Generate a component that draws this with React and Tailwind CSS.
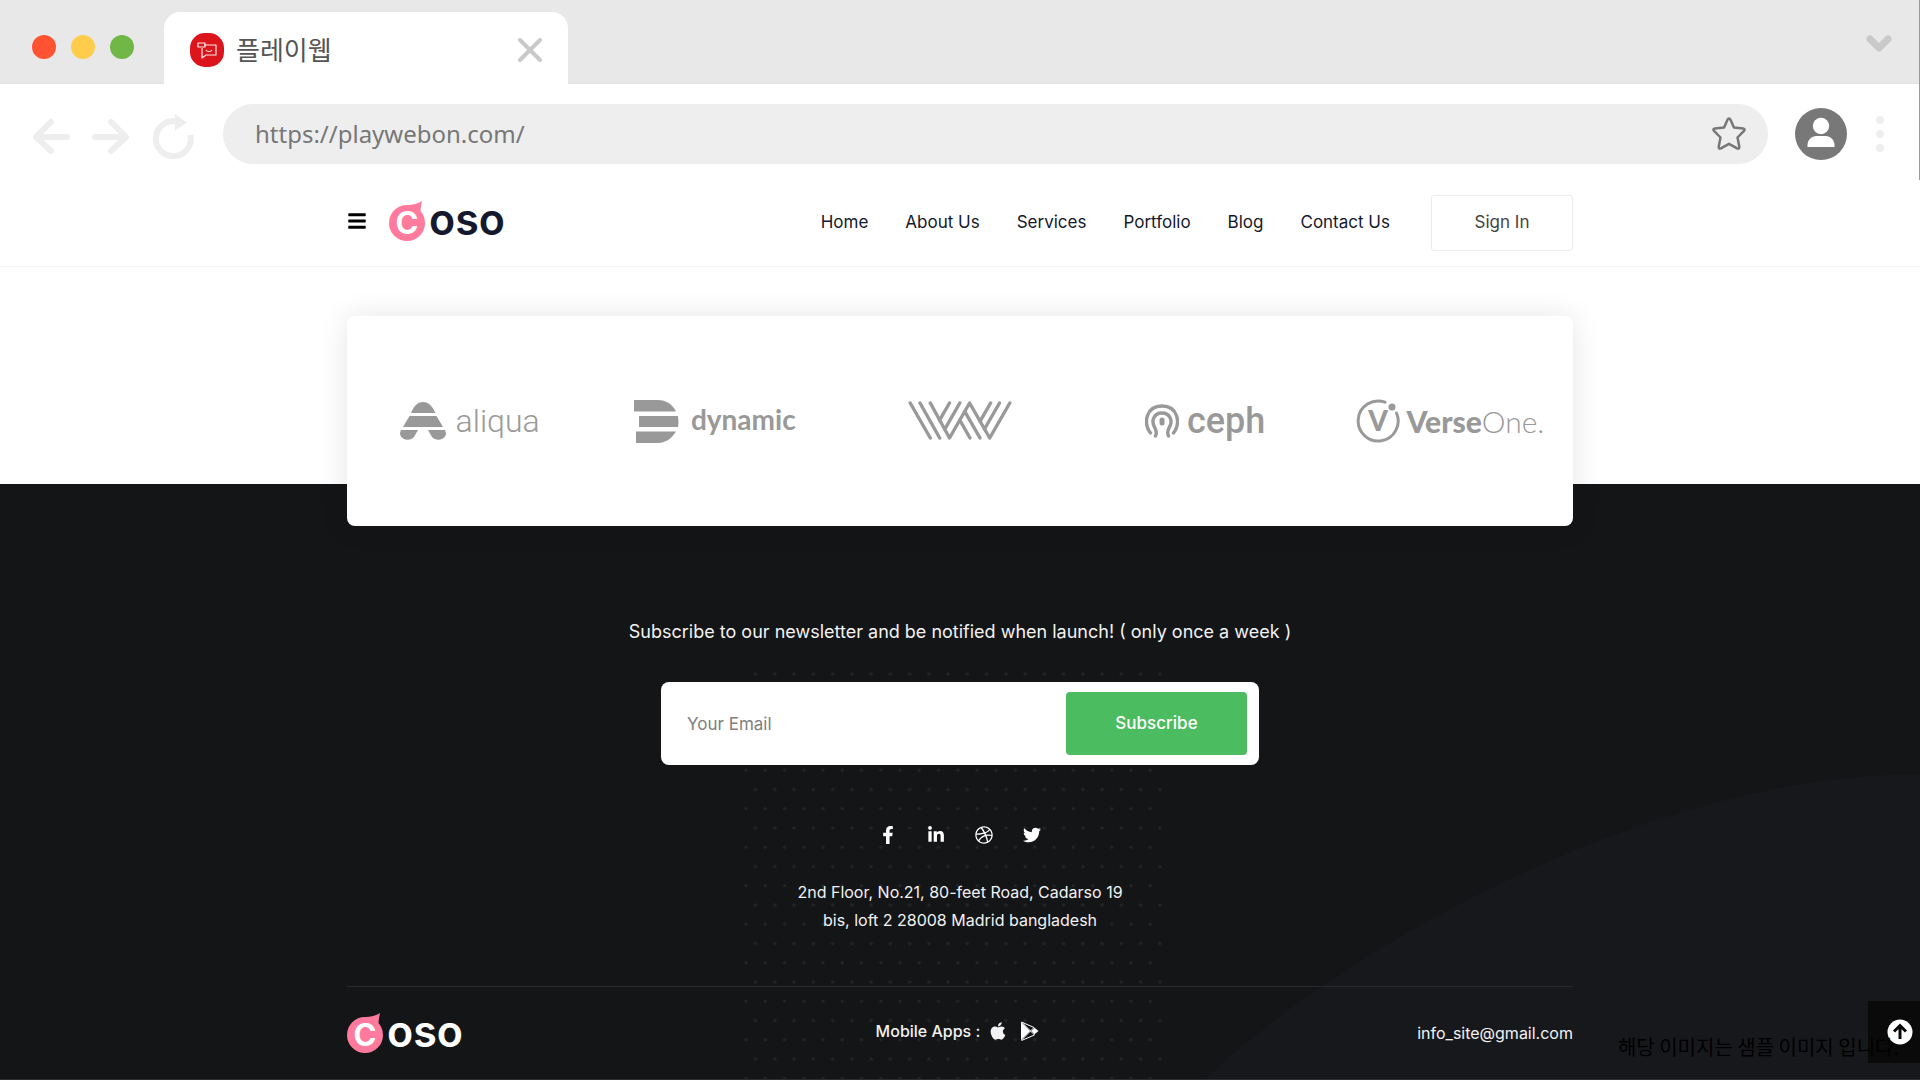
import { FaApple, FaBars, FaDribbble, FaFacebookF, FaLinkedinIn, FaTwitter } from 'react-icons/fa';

const navLinks = ['Home', 'About Us', 'Services', 'Portfolio', 'Blog', 'Contact Us'];

const socials = [
  { name: 'Facebook', icon: FaFacebookF },
  { name: 'LinkedIn', icon: FaLinkedinIn },
  { name: 'Dribbble', icon: FaDribbble },
  { name: 'Twitter', icon: FaTwitter },
];

const BrowserBar = () => (
  <div className="border-r border-[#999] bg-white font-['Noto_Sans','Noto_Sans_CJK_KR',sans-serif]">
    {/* tab strip */}
    <div className="flex h-[84px] items-end border-b border-[#e2e2e2] bg-[#e8e8e8]">
      <div className="flex h-[72px] w-[164px] shrink-0 items-center gap-[15px] pl-8">
        <span className="size-6 rounded-full bg-[#ff5331]" />
        <span className="size-6 rounded-full bg-[#ffcd4b]" />
        <span className="size-6 rounded-full bg-[#70b748]" />
      </div>
      <div className="-mb-px flex h-[72px] w-[404px] items-center rounded-t-2xl bg-white px-[26px] pt-1">
        <svg className="size-[34px]" viewBox="0 0 34 34" fill="none">
          <rect width="34" height="34" rx="15" fill="#dc141c" />
          <g stroke="#fff" strokeWidth="1.2" strokeLinejoin="round" strokeOpacity="0.9">
            <path d="M14 12h12v10H16l-4 3V15" />
            <path d="M8 10h7v4H8z" />
            <path d="M16 17c1 2 5 2 6 0" />
          </g>
        </svg>
        <span className="ml-3 text-[26px] leading-8 text-[#555]">플레이웹</span>
        <button aria-label="Close tab" className="ml-auto">
          <svg className="size-6" viewBox="0 0 24 24" stroke="#c9c9c9" strokeWidth="4" strokeLinecap="round">
            <path d="M2 2l20 20M22 2L2 22" />
          </svg>
        </button>
      </div>
      <button aria-label="Tabs" className="mr-[26px] mb-[30px] ml-auto">
        <svg className="h-[18px] w-7" viewBox="0 0 28 18" fill="none" stroke="#c9c9c9" strokeWidth="7" strokeLinecap="round" strokeLinejoin="round">
          <path d="M5 4l9 9 9-9" />
        </svg>
      </button>
    </div>

    {/* address bar */}
    <div className="flex h-24 items-center pt-1 pr-[33px] pl-8">
      <div className="flex w-[191px] shrink-0 items-center">
        <button aria-label="Back">
          <svg className="size-10" viewBox="0 0 40 40" fill="none" stroke="#eee" strokeWidth="6" strokeLinecap="round" strokeLinejoin="round">
            <path d="M35 23H5M19 8L4 23l15 14" />
          </svg>
        </button>
        <button aria-label="Forward" className="ml-5">
          <svg className="size-10" viewBox="0 0 40 40" fill="none" stroke="#eee" strokeWidth="6" strokeLinecap="round" strokeLinejoin="round">
            <path d="M3 23h30M19 8l15 15-15 14" />
          </svg>
        </button>
        <button aria-label="Reload" className="ml-5">
          <svg className="h-[52px] w-11" viewBox="0 0 44 52" fill="none">
            <path d="M38.500 27A17.500 17.500 0 1 1 25 13.500" stroke="#eee" strokeWidth="6" />
            <path d="M23 6l12 8.500-12 8z" fill="#eee" />
          </svg>
        </button>
      </div>
      <div className="flex h-[60px] flex-1 items-center rounded-full bg-[#eee] pr-[21px] pl-8">
        <input
          type="text"
          aria-label="Address"
          defaultValue="https://playwebon.com/"
          className="flex-1 bg-transparent text-2xl text-[#777] outline-none"
        />
        <button aria-label="Bookmark">
          <svg className="size-9" viewBox="0 0 36 36" fill="none" stroke="#777" strokeWidth="2.500" strokeLinejoin="round">
            <path d="M18 2.500q1 0 1.400 1l3.500 8 9.300 1q2.400.6.800 2.300L26.500 21.500l1.800 9.300q0 2.600-2.200 1.600L18 27.800l-8.100 4.600q-2.200 1-2.200-1.600l1.800-9.300L3 14.800q-1.600-1.700.8-2.300l9.300-1 3.500-8q.4-1 1.400-1z" />
          </svg>
        </button>
      </div>
      <button aria-label="Profile" className="ml-[27px]">
        <svg className="size-[52px]" viewBox="0 0 52 52">
          <circle cx="26" cy="26" r="26" fill="#787878" />
          <circle cx="26" cy="18" r="8.200" fill="#fff" />
          <path d="M12.500 39v-2c0-5 4-9 9-9h9c5 0 9 4 9 9v2z" fill="#fff" />
        </svg>
      </button>
      <button aria-label="Menu" className="ml-[27px]">
        <svg className="h-9 w-3" viewBox="0 0 12 36" fill="#eee">
          <circle cx="6" cy="4" r="4" />
          <circle cx="6" cy="18" r="4" />
          <circle cx="6" cy="32" r="4" />
        </svg>
      </button>
    </div>
  </div>
);

const Logo = () => (
  <span className="flex h-10 items-start">
    <svg className="h-10 w-9" viewBox="0 0 36 40">
      <path d="M18 4q9 0 15-4-1 4-1.500 10z" fill="#ff7a9c" />
      <circle cx="18" cy="22" r="18" fill="#ff7a9c" />
      <text x="18" y="33" textAnchor="middle" fill="#fff" className="font-['Inter',sans-serif] text-[31px] font-bold">C</text>
    </svg>
    <span className="ml-1 text-[43px] leading-9 font-semibold">oso</span>
  </span>
);

const Header = () => (
  <header className="border-b border-[#f5f5f5] bg-white">
    <div className="mx-auto flex h-[86px] w-full max-w-[1226px] items-center">
      <div className="mb-1 flex items-center">
        <button aria-label="Open menu" className="text-xl text-black">
          <FaBars />
        </button>
        <a href="#home" className="ml-[22px] text-[#15192d]">
          <Logo />
        </a>
      </div>
      <nav className="ml-auto flex gap-[37px] text-[17px] text-[#15192d]">
        {navLinks.map((link) => (
          <a key={link} href="#top">{link}</a>
        ))}
      </nav>
      <a href="#signin" className="ml-[41px] flex h-14 w-[142px] items-center justify-center rounded-[3px] border border-[#ececec] text-[17px] text-[#444]">
        Sign In
      </a>
    </div>
  </header>
);

const Brands = () => (
  <div className="grid h-[210px] grid-cols-5 place-items-center rounded-lg bg-white whitespace-nowrap text-[#999] shadow-[0_0_30px_rgba(0,0,0,0.1)]">
    <div className="flex items-center gap-2.5">
      <svg className="h-[38px] w-[46px]" viewBox="0 0 46 38" fill="currentColor">
        <path d="M11 11C14 4 17 0 23 0s9 4 12.500 11z" />
        <path d="M9.500 14h27L43 25H3z" />
        <path d="M1 28h17l-4 7c-4 5-14 3-14-4zM28 28h17l1 3c0 7-10 9-14 4z" />
      </svg>
      <span className="font-['Roboto',sans-serif] text-[32px] leading-9 font-light">aliqua</span>
    </div>
    <div className="flex items-center gap-3">
      <svg className="h-[43px] w-[45px]" viewBox="0 0 45 43" fill="currentColor">
        <path d="M0 0h24c8 0 14 4 18 11.500H0z" />
        <path d="M5 16h39q1 5.500 0 11H5z" />
        <path d="M2 31.500h40C38 38 32 43 24 43H2z" />
      </svg>
      <span className="pb-1 font-['Lato',sans-serif] text-[28px] leading-9 font-bold">dynamic</span>
    </div>
    <svg role="img" aria-label="W" className="h-10 w-[104px]" viewBox="0 0 104 40" fill="none" stroke="currentColor" strokeWidth="3.400" strokeLinecap="round" strokeLinejoin="round">
      <path d="M2.200 2L22.300 37M12 2L31.700 37M22.300 2L41.500 37 61.600 2 81.700 37 101.800 2" />
      <path d="M41.500 2L31.600 19.200M51.800 2L36.700 28.300" />
      <path d="M56.700 10.400L72 37M51.800 19.100L62 37" />
      <path d="M82.600 2L72 20.300M91.500 2L76.500 28" />
    </svg>
    <div className="flex items-center gap-2">
      <svg className="h-[34px] w-[34px]" viewBox="0 0 34 34" fill="none" stroke="currentColor" strokeWidth="3.400" strokeLinecap="round">
        <path d="M5.500 29C-2 19 1 2 17 2s19 17 11.500 27" />
        <path d="M10.500 32c1.500-3 1-5-.5-8C5.500 17 9 9 17 9s11.500 8 7 15c-1.500 3-2 5-.5 8" />
        <path d="M17 16v3" strokeWidth="5" />
        <path d="M17 24v8" strokeWidth="1.500" stroke="#fff" />
      </svg>
      <span className="font-['Roboto',sans-serif] text-4xl leading-9 font-medium">ceph</span>
    </div>
    <div className="flex items-center gap-1.5">
      <svg className="size-11" viewBox="0 0 44 44" fill="none">
        <path d="M29 3.200A20 20 0 1 0 40.500 14" stroke="currentColor" strokeWidth="3" strokeLinecap="round" />
        <circle cx="36" cy="8" r="3.500" fill="currentColor" />
        <text x="22" y="32" textAnchor="middle" fill="currentColor" className="font-['Lato',sans-serif] text-[28px] font-black">V</text>
      </svg>
      <span className="font-['Lato',sans-serif] text-[30px] leading-9 font-light">
        <b className="font-black">Verse</b>One.
      </span>
    </div>
  </div>
);

const FooterBackdrop = () => (
  <>
    <svg className="absolute right-0 bottom-0 h-[305px] w-[715px]" viewBox="0 0 715 305" fill="#17181c">
      <path d="M0 305C125 185 435 0 715 0v305z" />
    </svg>
    <svg className="absolute bottom-0 left-1/2 h-[408px] w-[432px] -translate-x-1/2" viewBox="0 0 432 408">
      <defs>
        <pattern id="dots" x="-1" y="-7" width="19.250" height="38.500" patternUnits="userSpaceOnUse">
          <circle cx="3" cy="29.200" r="1.600" fill="#242527" />
          <circle cx="12.600" cy="10" r="1.600" fill="#242527" />
        </pattern>
      </defs>
      <rect width="420" height="408" fill="url(#dots)" />
    </svg>
  </>
);

const Footer = () => (
  <footer className="relative mt-[217px] border-b border-[#2e2e30] bg-[#141517] text-[#f2f2f2]">
    <FooterBackdrop />
    <div className="relative mx-auto w-full max-w-[1226px]">
      <div className="-translate-y-[168px]">
        <Brands />
      </div>

      <div className="-mt-[76px] flex flex-col items-center">
        <p className="text-lg leading-7">
          Subscribe to our newsletter and be notified when launch! ( only once a week )
        </p>
        <form className="mt-9 flex h-[83px] w-full max-w-[598px] items-center rounded-lg bg-white pr-3 pl-[26px]">
          <input
            type="email"
            aria-label="Your Email"
            placeholder="Your Email"
            className="h-full flex-1 text-[17px] text-[#444] outline-none placeholder:text-[#808080]"
          />
          <button type="button" className="h-[63px] w-[181px] rounded bg-[#4bbc5f] text-[17px] font-medium text-white">
            Subscribe
          </button>
        </form>
        <div className="mt-14 flex text-lg text-white">
          {socials.map(({ name, icon: Icon }) => (
            <a key={name} href="#social" aria-label={name} className="flex h-7 w-12 items-center justify-center">
              <Icon />
            </a>
          ))}
        </div>
        <address className="mt-[29px] text-center text-base leading-7 not-italic">
          2nd Floor, No.21, 80-feet Road, Cadarso 19
          <br />
          bis, loft 2 28008 Madrid bangladesh
        </address>
      </div>

      <div className="mt-[52px] grid h-[93px] grid-cols-3 items-center border-t border-[#29292c]">
        <a href="#home" aria-label="Coso" className="text-white">
          <Logo />
        </a>
        <div className="mb-1 flex items-center justify-center text-base font-medium">
          <span>Mobile Apps :</span>
          <a href="#ios" aria-label="App Store" className="ml-2 text-xl">
            <FaApple />
          </a>
          <a href="#android" aria-label="Google Play" className="mr-1 ml-3">
            <svg className="size-5" viewBox="0 0 20 20">
              <path d="M1 1v18L10 10z" fill="#fff" />
              <path d="M1.500 1l9 9-9 9M1.500 1L14 6.500 10.500 10l4 4L1.500 19.500" fill="none" stroke="#fff" strokeWidth="1" />
              <path d="M14.500 6.800l4 3.200-4 3.200-3-3.200z" fill="#fff" />
            </svg>
          </a>
        </div>
        <a href="mailto:info_site@gmail.com" className="text-right text-base">info_site@gmail.com</a>
      </div>
    </div>

    <button aria-label="Back to top" className="absolute right-0 bottom-4 flex h-[62px] w-[52px] items-center justify-center bg-[#0a0a0a] pl-3">
      <svg className="size-[26px]" viewBox="0 0 26 26" fill="none">
        <circle cx="13" cy="13" r="12.500" fill="#fff" />
        <path d="M13 20V7M7 12.500L13 6.500l6 6" stroke="#0a0a0a" strokeWidth="3" />
      </svg>
    </button>
    <p className="absolute right-[21px] bottom-4 font-['Noto_Sans_CJK_KR',sans-serif] text-xl leading-8 text-black">
      해당 이미지는 샘플 이미지 입니다.
    </p>
  </footer>
);

const App = () => (
  <div className="bg-white font-['Inter',sans-serif]">
    <BrowserBar />
    <Header />
    <Footer />
  </div>
);

export default App;
